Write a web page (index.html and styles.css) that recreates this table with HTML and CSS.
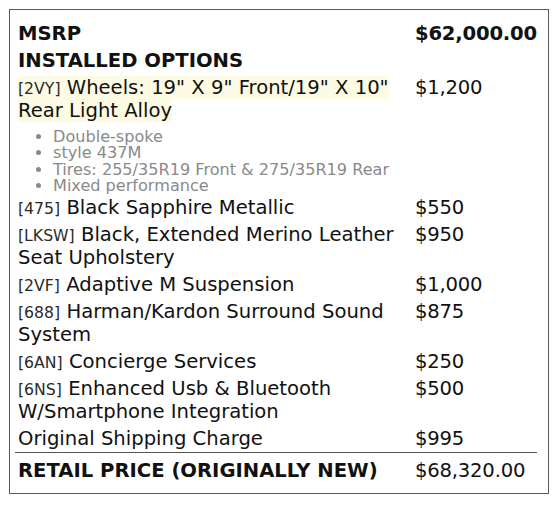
FILE: index.html
```html
<!DOCTYPE html>
<html>
<head>
<meta charset="utf-8">
<link rel="stylesheet" href="styles.css">
</head>
<body>
<div class="sticker">
  <table class="prices">
    <colgroup>
      <col class="c-desc">
      <col class="c-amt">
    </colgroup>
    <tr class="head">
      <td class="desc">MSRP</td>
      <td class="amt">$62,000.00</td>
    </tr>
    <tr class="head">
      <td class="desc" colspan="2">INSTALLED OPTIONS</td>
    </tr>
    <tr>
      <td class="desc">
        <span class="hl"><span class="code">[2VY]</span> Wheels: 19" X 9" Front/19" X 10" Rear Light Alloy</span>
        <ul class="notes">
          <li>Double-spoke</li>
          <li>style 437M</li>
          <li>Tires: 255/35R19 Front &amp; 275/35R19 Rear</li>
          <li>Mixed performance</li>
        </ul>
      </td>
      <td class="amt">$1,200</td>
    </tr>
    <tr>
      <td class="desc"><span class="code">[475]</span> Black Sapphire Metallic</td>
      <td class="amt">$550</td>
    </tr>
    <tr>
      <td class="desc"><span class="code">[LKSW]</span> Black, Extended Merino Leather Seat Upholstery</td>
      <td class="amt">$950</td>
    </tr>
    <tr>
      <td class="desc"><span class="code">[2VF]</span> Adaptive M Suspension</td>
      <td class="amt">$1,000</td>
    </tr>
    <tr>
      <td class="desc"><span class="code">[688]</span> Harman/Kardon Surround Sound System</td>
      <td class="amt">$875</td>
    </tr>
    <tr>
      <td class="desc"><span class="code">[6AN]</span> Concierge Services</td>
      <td class="amt">$250</td>
    </tr>
    <tr>
      <td class="desc"><span class="code">[6NS]</span> Enhanced Usb &amp; Bluetooth W/Smartphone Integration</td>
      <td class="amt">$500</td>
    </tr>
    <tr>
      <td class="desc">Original Shipping Charge</td>
      <td class="amt">$995</td>
    </tr>
    <tr class="total">
      <td class="desc">RETAIL PRICE (ORIGINALLY NEW)</td>
      <td class="amt">$68,320.00</td>
    </tr>
  </table>
</div>
</body>
</html>
```

FILE: styles.css
```css
html, body {
  margin: 0;
  padding: 0;
  background: #ffffff;
}

body {
  padding: 9px 0 0 9px;
  font-family: "DejaVu Sans", sans-serif;
  color: #111111;
}

.sticker {
  width: 523px;
  height: 473px;
  border: 1px solid #5a5a5a;
  padding: 10px 10px 0 5px;
}

.prices {
  width: 522px;
  table-layout: fixed;
  border-collapse: collapse;
  font-size: 19.6px;
  line-height: 23px;
}

.c-desc {
  width: 397px;
}

.prices td {
  padding: 2px 3px;
  vertical-align: top;
}

.prices .amt {
  white-space: nowrap;
  letter-spacing: -0.2px;
}

.head td {
  font-weight: bold;
}

.code {
  font-size: 15.7px;
  line-height: 16px;
  color: #2a2a2a;
}

.hl {
  background: #fdfbe3;
}

.notes {
  margin: 7px 0 -2px 0;
  padding: 0 0 0 35px;
  font-size: 16.1px;
  line-height: 16.3px;
  color: #8a8a8a;
}

.total td {
  border-top: 1px solid #555555;
  font-weight: normal;
  padding-top: 6px;
}

.total .desc {
  font-weight: bold;
}
```
